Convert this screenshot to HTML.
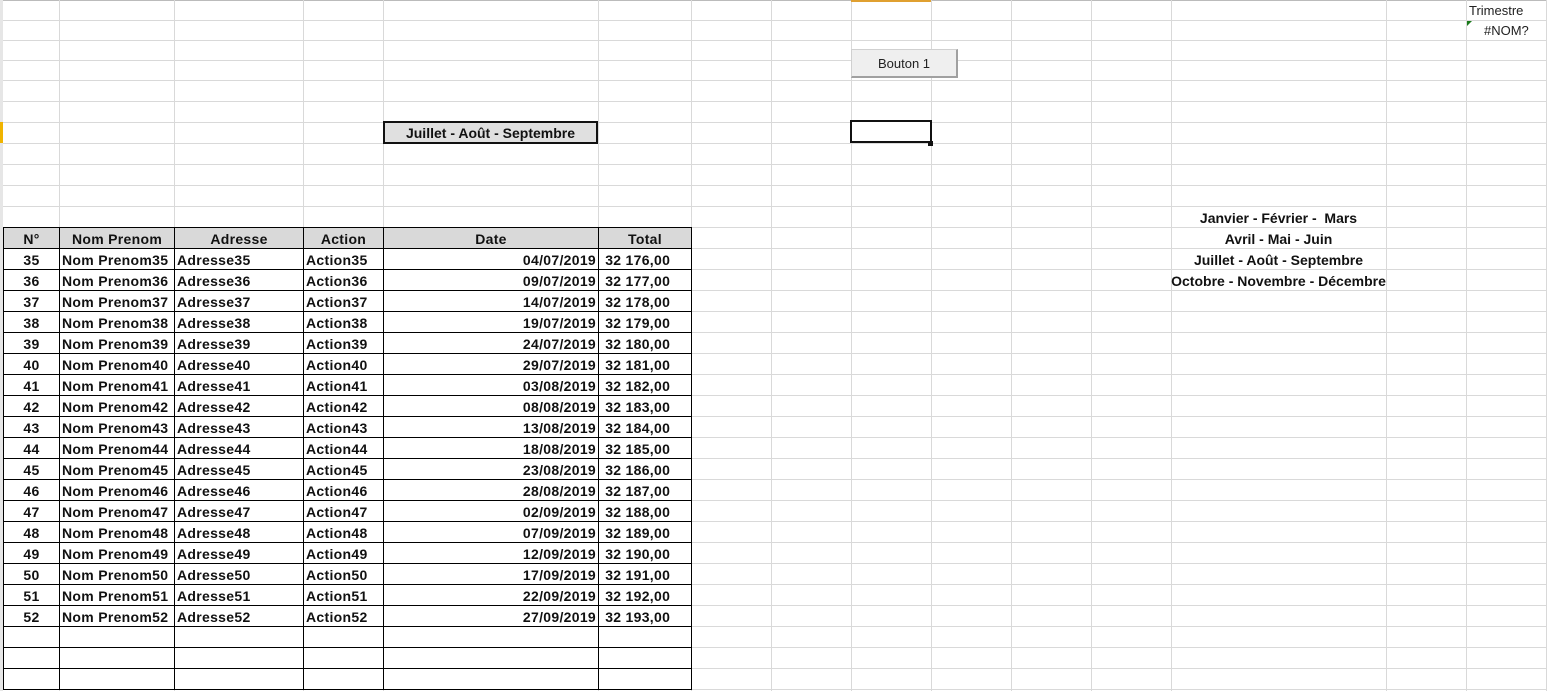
<!DOCTYPE html>
<html><head><meta charset="utf-8"><style>
html,body{margin:0;padding:0;background:#fff;}
body{width:1547px;height:691px;position:relative;overflow:hidden;font-family:"Liberation Sans",Arial,sans-serif;}
.v{position:absolute;top:0;height:691px;width:1px;background:#d9d9d9;}
.h{position:absolute;left:0;width:1547px;height:1px;background:#d9d9d9;}
table{position:absolute;left:3px;top:227px;border-collapse:collapse;font-weight:bold;font-size:14px;letter-spacing:0.3px;color:#111;}
td{border:1px solid #000;height:20px;padding:0 2px;line-height:20px;white-space:nowrap;overflow:hidden;}
td b{position:relative;top:1px;font-weight:bold}
tr.hd td{background:#d9d9d9;text-align:center;}
.c{text-align:center}.r{text-align:right}
.t{position:absolute;font-weight:bold;font-size:14px;color:#111;text-align:center;width:215px;left:1171px;line-height:21px;}
</style></head><body>
<div class="h" style="top:0;background:#bbb"></div>
<div class="h" style="top:20px"></div><div class="h" style="top:40px"></div><div class="h" style="top:60px"></div>
<div class="h" style="top:80px"></div><div class="h" style="top:101px"></div><div class="h" style="top:122px"></div>
<div class="h" style="top:143px"></div><div class="h" style="top:164px"></div><div class="h" style="top:185px"></div>
<div class="h" style="top:206px"></div><div class="h" style="top:227px"></div><div class="h" style="top:248px"></div>
<div class="h" style="top:269px"></div><div class="h" style="top:290px"></div><div class="h" style="top:311px"></div>
<div class="h" style="top:332px"></div><div class="h" style="top:353px"></div><div class="h" style="top:374px"></div>
<div class="h" style="top:395px"></div><div class="h" style="top:416px"></div><div class="h" style="top:437px"></div>
<div class="h" style="top:458px"></div><div class="h" style="top:479px"></div><div class="h" style="top:500px"></div>
<div class="h" style="top:521px"></div><div class="h" style="top:542px"></div><div class="h" style="top:563px"></div>
<div class="h" style="top:584px"></div><div class="h" style="top:605px"></div><div class="h" style="top:626px"></div>
<div class="h" style="top:647px"></div><div class="h" style="top:668px"></div><div class="h" style="top:689px"></div>
<div class="v" style="left:59px"></div><div class="v" style="left:174px"></div><div class="v" style="left:303px"></div>
<div class="v" style="left:383px"></div><div class="v" style="left:598px"></div><div class="v" style="left:691px"></div>
<div class="v" style="left:771px"></div><div class="v" style="left:851px"></div><div class="v" style="left:931px"></div>
<div class="v" style="left:1011px"></div><div class="v" style="left:1091px"></div><div class="v" style="left:1171px"></div>
<div class="v" style="left:1386px"></div><div class="v" style="left:1466px"></div><div class="v" style="left:1546px"></div>
<div style="position:absolute;left:0;top:0;width:3px;height:691px;background:#e6e6e6"></div>
<div style="position:absolute;left:0;top:122px;width:3px;height:21px;background:#f0b400"></div>
<div style="position:absolute;left:851px;top:0;width:80px;height:2px;background:#e0a030"></div>

<div style="position:absolute;left:383px;top:121px;width:211px;height:19px;border:2px solid #111;background:#e0e0e0;font-weight:bold;font-size:14px;text-align:center;line-height:21px;color:#111">Juillet - Août - Septembre</div>
<div style="position:absolute;left:851px;top:49px;width:104px;height:26px;background:#efefef;border:1px solid #d0d0d0;border-right:2px solid #a0a0a0;border-bottom:2px solid #a0a0a0;font-size:13px;text-align:center;line-height:27px;color:#222">Bouton 1</div>
<div style="position:absolute;left:850px;top:120px;width:78px;height:19px;border:2px solid #111;background:#fff"></div>
<div style="position:absolute;left:928px;top:141px;width:5px;height:5px;background:#111"></div>

<div style="position:absolute;left:1469px;top:3px;font-size:13px;color:#222">Trimestre</div>
<div style="position:absolute;left:1484px;top:23px;font-size:13px;color:#222">#NOM?</div>
<div style="position:absolute;left:1467px;top:21px;width:0;height:0;border-top:5px solid #1a7a1a;border-right:5px solid transparent"></div>

<div class="t" style="top:208px">Janvier - Février -&nbsp; Mars</div>
<div class="t" style="top:229px">Avril - Mai - Juin</div>
<div class="t" style="top:250px">Juillet - Août - Septembre</div>
<div class="t" style="top:271px">Octobre - Novembre - Décembre</div>

<table>
<colgroup><col style="width:56px"><col style="width:115px"><col style="width:129px"><col style="width:80px"><col style="width:215px"><col style="width:93px"></colgroup>
<tr class="hd"><td><b>N°</b></td><td><b>Nom Prenom</b></td><td><b>Adresse</b></td><td><b>Action</b></td><td><b>Date</b></td><td><b>Total</b></td></tr>
<tr><td class="c"><b>35</b></td><td><b>Nom Prenom35</b></td><td><b>Adresse35</b></td><td><b>Action35</b></td><td class="r"><b>04/07/2019</b></td><td><b>&nbsp;32 176,00</b></td></tr>
<tr><td class="c"><b>36</b></td><td><b>Nom Prenom36</b></td><td><b>Adresse36</b></td><td><b>Action36</b></td><td class="r"><b>09/07/2019</b></td><td><b>&nbsp;32 177,00</b></td></tr>
<tr><td class="c"><b>37</b></td><td><b>Nom Prenom37</b></td><td><b>Adresse37</b></td><td><b>Action37</b></td><td class="r"><b>14/07/2019</b></td><td><b>&nbsp;32 178,00</b></td></tr>
<tr><td class="c"><b>38</b></td><td><b>Nom Prenom38</b></td><td><b>Adresse38</b></td><td><b>Action38</b></td><td class="r"><b>19/07/2019</b></td><td><b>&nbsp;32 179,00</b></td></tr>
<tr><td class="c"><b>39</b></td><td><b>Nom Prenom39</b></td><td><b>Adresse39</b></td><td><b>Action39</b></td><td class="r"><b>24/07/2019</b></td><td><b>&nbsp;32 180,00</b></td></tr>
<tr><td class="c"><b>40</b></td><td><b>Nom Prenom40</b></td><td><b>Adresse40</b></td><td><b>Action40</b></td><td class="r"><b>29/07/2019</b></td><td><b>&nbsp;32 181,00</b></td></tr>
<tr><td class="c"><b>41</b></td><td><b>Nom Prenom41</b></td><td><b>Adresse41</b></td><td><b>Action41</b></td><td class="r"><b>03/08/2019</b></td><td><b>&nbsp;32 182,00</b></td></tr>
<tr><td class="c"><b>42</b></td><td><b>Nom Prenom42</b></td><td><b>Adresse42</b></td><td><b>Action42</b></td><td class="r"><b>08/08/2019</b></td><td><b>&nbsp;32 183,00</b></td></tr>
<tr><td class="c"><b>43</b></td><td><b>Nom Prenom43</b></td><td><b>Adresse43</b></td><td><b>Action43</b></td><td class="r"><b>13/08/2019</b></td><td><b>&nbsp;32 184,00</b></td></tr>
<tr><td class="c"><b>44</b></td><td><b>Nom Prenom44</b></td><td><b>Adresse44</b></td><td><b>Action44</b></td><td class="r"><b>18/08/2019</b></td><td><b>&nbsp;32 185,00</b></td></tr>
<tr><td class="c"><b>45</b></td><td><b>Nom Prenom45</b></td><td><b>Adresse45</b></td><td><b>Action45</b></td><td class="r"><b>23/08/2019</b></td><td><b>&nbsp;32 186,00</b></td></tr>
<tr><td class="c"><b>46</b></td><td><b>Nom Prenom46</b></td><td><b>Adresse46</b></td><td><b>Action46</b></td><td class="r"><b>28/08/2019</b></td><td><b>&nbsp;32 187,00</b></td></tr>
<tr><td class="c"><b>47</b></td><td><b>Nom Prenom47</b></td><td><b>Adresse47</b></td><td><b>Action47</b></td><td class="r"><b>02/09/2019</b></td><td><b>&nbsp;32 188,00</b></td></tr>
<tr><td class="c"><b>48</b></td><td><b>Nom Prenom48</b></td><td><b>Adresse48</b></td><td><b>Action48</b></td><td class="r"><b>07/09/2019</b></td><td><b>&nbsp;32 189,00</b></td></tr>
<tr><td class="c"><b>49</b></td><td><b>Nom Prenom49</b></td><td><b>Adresse49</b></td><td><b>Action49</b></td><td class="r"><b>12/09/2019</b></td><td><b>&nbsp;32 190,00</b></td></tr>
<tr><td class="c"><b>50</b></td><td><b>Nom Prenom50</b></td><td><b>Adresse50</b></td><td><b>Action50</b></td><td class="r"><b>17/09/2019</b></td><td><b>&nbsp;32 191,00</b></td></tr>
<tr><td class="c"><b>51</b></td><td><b>Nom Prenom51</b></td><td><b>Adresse51</b></td><td><b>Action51</b></td><td class="r"><b>22/09/2019</b></td><td><b>&nbsp;32 192,00</b></td></tr>
<tr><td class="c"><b>52</b></td><td><b>Nom Prenom52</b></td><td><b>Adresse52</b></td><td><b>Action52</b></td><td class="r"><b>27/09/2019</b></td><td><b>&nbsp;32 193,00</b></td></tr>
<tr><td></td><td></td><td></td><td></td><td></td><td></td></tr>
<tr><td></td><td></td><td></td><td></td><td></td><td></td></tr>
<tr><td></td><td></td><td></td><td></td><td></td><td></td></tr>
</table>
</body></html>
